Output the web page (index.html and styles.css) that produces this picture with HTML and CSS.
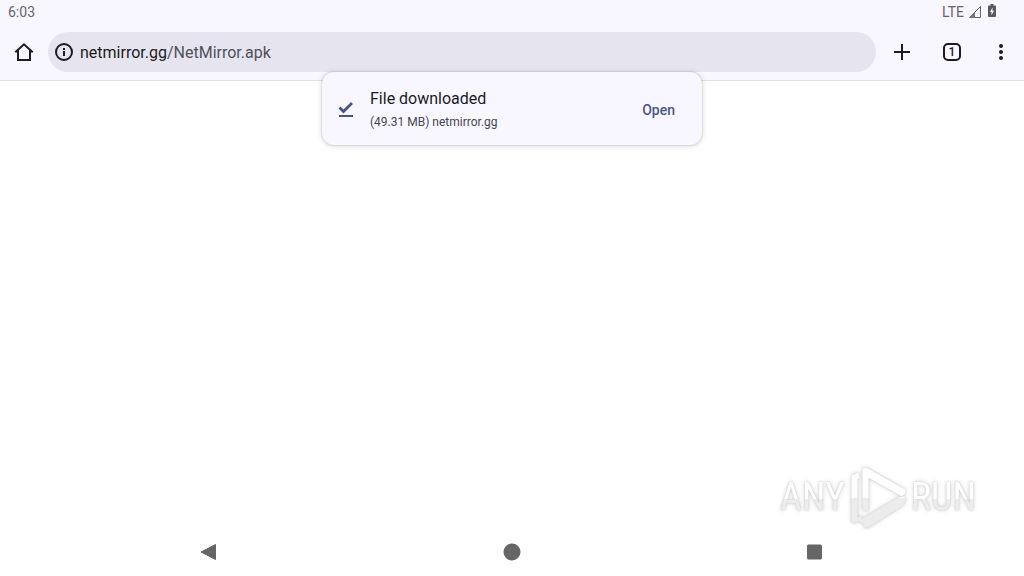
FILE: index.html
```
<!DOCTYPE html>
<html lang="en">
<head>
    <meta charset="utf-8">
    <meta name="viewport" content="width=device-width, initial-scale=1">
    <title>netmirror.gg</title>
    <link rel="stylesheet" href="styles.css">
</head>
<body>
    <header class="top">
        <div class="status">
            <span>6:03</span>
            <div class="status-icons">
                <span>LTE</span>
                <svg class="signal" width="14" height="14" viewBox="0 0 14 14">
                    <path d="M1.500 12.500 12.500 1.500v11z" fill="none" stroke="#66656d"/>
                    <path d="M1 13l6-6v6z" fill="#77767e"/>
                </svg>
                <svg width="8" height="14" viewBox="0 0 8 14">
                    <path d="M2.500 0h3v1.500H7a1 1 0 0 1 1 1V12a1 1 0 0 1-1 1H1a1 1 0 0 1-1-1V2.500a1 1 0 0 1 1-1h1.500z" fill="#5a5961"/>
                    <path d="M4.500 3.500 2 8h1.500v3.200L6 6.800H4.500z" fill="#f8f7ff"/>
                </svg>
            </div>
        </div>
        <div class="toolbar">
            <button class="icon-btn" aria-label="Home">
                <svg width="24" height="24" viewBox="0 0 24 24" fill="none" stroke="#1b1b21" stroke-width="2">
                    <path d="M3.300 12.300 12 4.300l8.700 8M6 10.500V20h12v-9.500"/>
                </svg>
            </button>
            <div class="address">
                <button class="info-btn" aria-label="Site information">
                    <svg width="24" height="24" viewBox="0 0 24 24">
                        <circle cx="12" cy="12" r="8" fill="none" stroke="#1b1b21" stroke-width="2"/>
                        <path d="M11 8h2v2h-2zM11 11h2v5h-2z" fill="#1b1b21"/>
                    </svg>
                </button>
                <a class="url" href="#">netmirror.gg<span>/NetMirror.apk</span></a>
            </div>
            <div class="actions">
                <button class="icon-btn" aria-label="New tab">
                    <svg width="24" height="24" viewBox="0 0 24 24" stroke="#1b1b21" stroke-width="2">
                        <path d="M12 4v16M4 12h16"/>
                    </svg>
                </button>
                <button class="icon-btn" aria-label="Tabs"><span class="tab-count">1</span></button>
                <button class="icon-btn" aria-label="Menu">
                    <svg width="24" height="24" viewBox="0 0 24 24" fill="#1b1b21">
                        <circle cx="12" cy="6" r="2"/>
                        <circle cx="12" cy="12" r="2"/>
                        <circle cx="12" cy="18" r="2"/>
                    </svg>
                </button>
            </div>
        </div>
    </header>

    <main class="page"></main>

    <div class="message" role="status">
        <svg width="24" height="24" viewBox="0 0 24 24" fill="none" stroke="#465681">
            <path d="M5.500 9.500l4 4 8.500-8.500" stroke-width="2.800"/>
            <path d="M5 18h14" stroke-width="2"/>
        </svg>
        <div class="message-text">
            <div class="message-title">File downloaded</div>
            <div class="message-info">(49.31 MB) netmirror.gg</div>
        </div>
        <button class="open-btn">Open</button>
    </div>

    <div class="watermark">
        <span>ANY</span>
        <svg width="60" height="68" viewBox="0 0 60 68">
            <defs>
                <linearGradient id="fade" gradientUnits="userSpaceOnUse" x1="0" y1="0" x2="0" y2="68">
                    <stop offset="0.520" stop-color="#fff"/>
                    <stop offset="0.520" stop-color="#ececec"/>
                </linearGradient>
            </defs>
            <g fill="url(#fade)" stroke="url(#fade)" stroke-linejoin="round">
                <path d="M10 10 4 13v46h4l5-3V53l-4 2V15h2z"/>
                <path d="M15 6l3-1 39 22v3l-3 3-34-19v33h-5z"/>
                <path d="M11 58 50 35l6-1 1 3-2 5-35 22h-3l-2-4 33-20-34 20z"/>
            </g>
        </svg>
        <span>RUN</span>
    </div>

    <nav class="nav">
        <button aria-label="Back">
            <svg width="20" height="20" viewBox="0 0 20 20"><path d="M2 10 16.500 2.500v15z" fill="#666" stroke="#666" stroke-linejoin="round"/></svg>
        </button>
        <button aria-label="Home screen">
            <svg width="20" height="20" viewBox="0 0 20 20"><circle cx="10" cy="10" r="8.500" fill="#666"/></svg>
        </button>
        <button aria-label="Recent apps">
            <svg width="20" height="20" viewBox="0 0 20 20"><rect x="2" y="2.500" width="15" height="15" rx="1.500" fill="#666"/></svg>
        </button>
    </nav>
</body>
</html>
```
FILE: styles.css
```
* {
    box-sizing: border-box;
}

body {
    margin: 0;
    min-height: 100vh;
    display: flex;
    flex-direction: column;
    position: relative;
    background: #fff;
    color: #1b1b21;
    font-family: Roboto, "Liberation Sans", sans-serif;
}

button {
    display: flex;
    align-items: center;
    justify-content: center;
    padding: 0;
    border: none;
    background: none;
    color: inherit;
    font: inherit;
    cursor: pointer;
}

svg {
    display: block;
}

.top {
    background: #f8f7ff;
    border-bottom: 1px solid #e2e1e8;
}

/* status bar */
.status {
    display: flex;
    justify-content: space-between;
    height: 24px;
    padding: 0 28px 0 8px;
    font-size: 14px;
    line-height: 25px;
    color: #66656d;
}

.status-icons {
    display: flex;
    gap: 4px;
}

.status-icons svg {
    margin-top: 4px;
}

.status-icons .signal {
    margin-top: 5px;
    margin-right: 2px;
}

/* browser toolbar */
.toolbar {
    display: flex;
    align-items: center;
    height: 56px;
}

.icon-btn {
    width: 48px;
    height: 48px;
    flex: none;
}

.address {
    flex: 1;
    display: flex;
    align-items: center;
    height: 40px;
    padding-left: 4px;
    border-radius: 20px;
    background: #e6e5ef;
}

.info-btn {
    width: 24px;
    height: 24px;
    margin-right: 4px;
}

.url {
    padding-top: 2px;
    color: #1b1b21;
    font-size: 16px;
    line-height: 24px;
    text-decoration: none;
}

.url span {
    color: #50505a;
}

.actions {
    display: flex;
    padding-left: 2px;
}

.actions .icon-btn:nth-child(2) {
    width: 52px;
}

.actions .icon-btn:last-child {
    width: 46px;
}

.tab-count {
    width: 18px;
    height: 18px;
    border: 2px solid #1b1b21;
    border-radius: 5px;
    font-size: 12px;
    font-weight: 500;
    line-height: 15px;
    text-align: center;
}

.page {
    flex: 1;
}

/* download message */
.message {
    position: absolute;
    top: 72px;
    left: 50%;
    transform: translateX(-50%);
    display: flex;
    align-items: center;
    width: 380px;
    max-width: 100%;
    padding: 14px 14px 12px 12px;
    border-radius: 12px;
    background: #f8f7ff;
    box-shadow: 0 0 2px rgba(0, 0, 0, 0.25), 0 1px 6px rgba(0, 0, 0, 0.14);
}

.message-text {
    flex: 1;
    padding-left: 12px;
}

.message-title {
    font-size: 16px;
    line-height: 26px;
}

.message-info {
    font-size: 12px;
    line-height: 21px;
    color: #47464f;
}

.open-btn {
    height: 40px;
    padding: 0 13px;
    color: #4c5682;
    font-size: 14px;
    font-weight: 500;
}

/* watermark over the page */
.watermark {
    position: absolute;
    right: 48px;
    bottom: 45px;
    display: flex;
    align-items: center;
    gap: 3px;
    color: #fff;
    font-family: "Liberation Sans Narrow", "Roboto Condensed", Roboto, sans-serif;
    font-size: 38px;
    line-height: 48px;
    pointer-events: none;
}

.watermark span {
    background: linear-gradient(to bottom, #fff 55%, #ececec 55%);
    -webkit-background-clip: text;
    background-clip: text;
    color: transparent;
}

.watermark span,
.watermark svg {
    filter: drop-shadow(0 0 1px #ccc) drop-shadow(0 0 2px #ddd);
}

/* system navigation */
.nav {
    display: grid;
    grid-template-columns: repeat(3, 1fr);
    height: 48px;
    padding: 0 57px;
}
```
